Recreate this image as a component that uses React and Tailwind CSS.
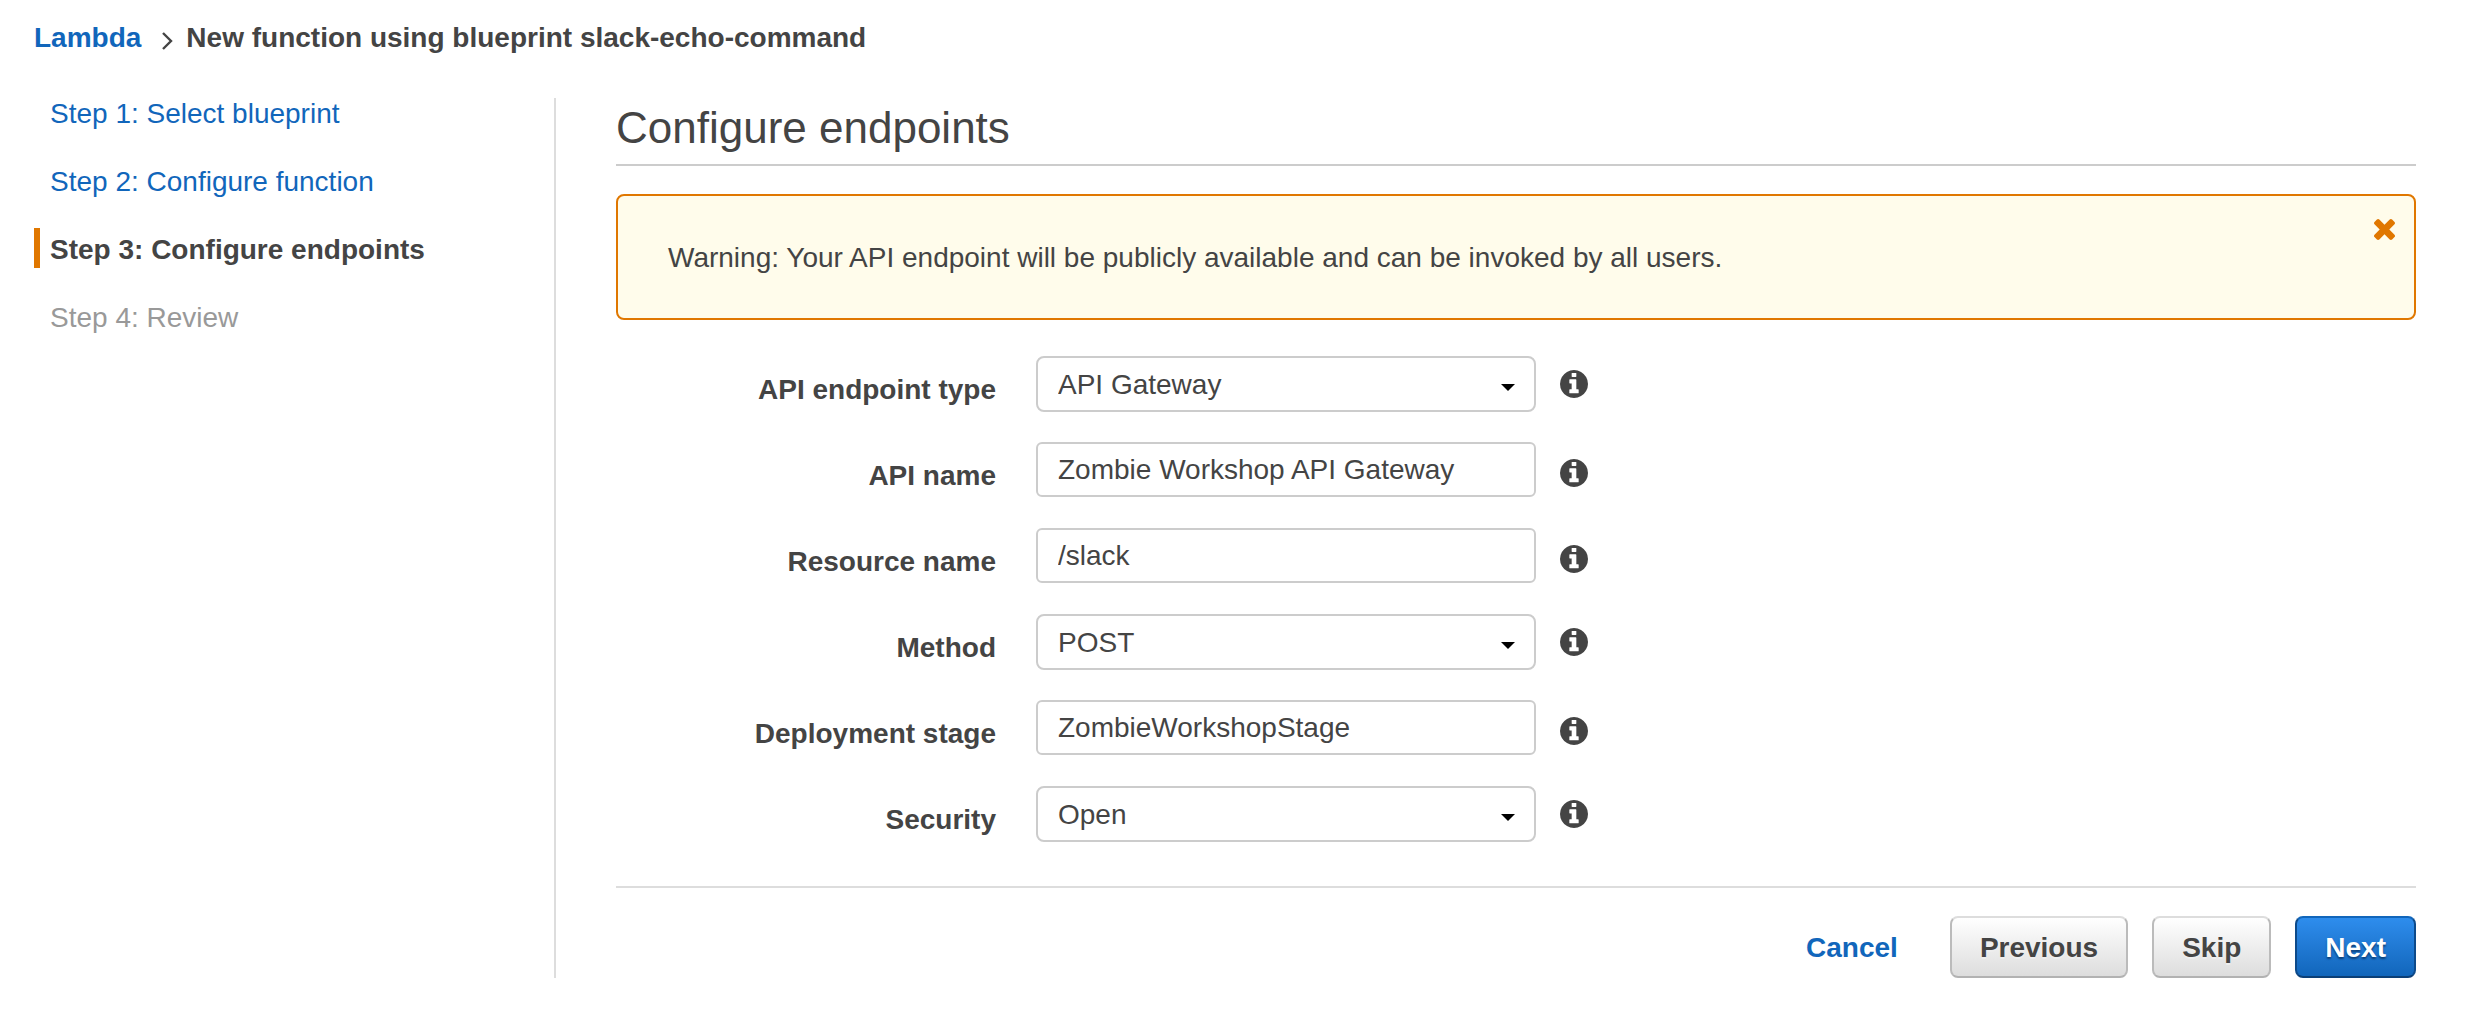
import React from 'react';

const steps = [
  { label: 'Step 1: Select blueprint', state: 'link' },
  { label: 'Step 2: Configure function', state: 'link' },
  { label: 'Step 3: Configure endpoints', state: 'current' },
  { label: 'Step 4: Review', state: 'disabled' },
];

const fields = [
  { id: 'endpoint-type', label: 'API endpoint type', kind: 'select', value: 'API Gateway' },
  { id: 'api-name', label: 'API name', kind: 'text', value: 'Zombie Workshop API Gateway' },
  { id: 'resource-name', label: 'Resource name', kind: 'text', value: '/slack' },
  { id: 'method', label: 'Method', kind: 'select', value: 'POST' },
  { id: 'stage', label: 'Deployment stage', kind: 'text', value: 'ZombieWorkshopStage' },
  { id: 'security', label: 'Security', kind: 'select', value: 'Open' },
];

function InfoIcon() {
  return (
    <svg viewBox="128 128 1536 1536" className="size-7" fill="currentColor" aria-hidden="true">
      <path d="M1152 1376v-160q0-14-9-23t-23-9h-96v-512q0-14-9-23t-23-9h-320q-14 0-23 9t-9 23v160q0 14 9 23t23 9h96v320h-96q-14 0-23 9t-9 23v160q0 14 9 23t23 9h448q14 0 23-9t9-23zm-128-896v-160q0-14-9-23t-23-9h-192q-14 0-23 9t-9 23v160q0 14 9 23t23 9h192q14 0 23-9t9-23zm640 416q0 209-103 385.5t-279.5 279.5-385.5 103-385.5-103-279.5-279.5-103-385.5 103-385.5 279.5-279.5 385.5-103 385.5 103 279.5 279.5 103 385.5z" />
    </svg>
  );
}

function CloseIcon() {
  return (
    <svg viewBox="302 366 1188 1188" className="size-[21px]" fill="currentColor" aria-hidden="true">
      <path d="M1490 1322q0 40-28 68l-136 136q-28 28-68 28t-68-28l-294-294-294 294q-28 28-68 28t-68-28l-136-136q-28-28-28-68t28-68l294-294-294-294q-28-28-28-68t28-68l136-136q28-28 68-28t68 28l294 294 294-294q28-28 68-28t68 28l136 136q28 28 28 68t-28 68l-294 294 294 294q28 28 28 68z" />
    </svg>
  );
}

function Step({ label, state }) {
  if (state === 'link') {
    return (
      <li className="h-10 border-l-6 border-transparent pl-[10px]">
        <a href="#" className="text-[#1166bb]">{label}</a>
      </li>
    );
  }
  if (state === 'current') {
    return (
      <li aria-current="step" className="h-10 border-l-6 border-[#e07700] pl-[10px] font-bold">
        {label}
      </li>
    );
  }
  return <li className="h-10 border-l-6 border-transparent pl-[10px] text-[#999999]">{label}</li>;
}

function Field({ id, label, kind, value }) {
  const isSelect = kind === 'select';
  return (
    <div className="flex h-14 items-start">
      <label htmlFor={id} className="w-[380px] shrink-0 pt-[14px] text-right font-bold">
        {label}
      </label>
      {isSelect ? (
        <div className="relative ml-10 w-[500px]">
          <select
            id={id}
            defaultValue={value}
            className="h-14 w-full appearance-none rounded-lg border-2 border-[#cccccc] bg-white px-5 pt-0.5"
          >
            <option>{value}</option>
          </select>
          <svg viewBox="0 0 14 7" className="pointer-events-none absolute top-7 right-[21px] h-[7px] w-[14px]" aria-hidden="true">
            <path d="M0 0h14L7 7z" fill="#000" />
          </svg>
        </div>
      ) : (
        <input
          id={id}
          type="text"
          defaultValue={value}
          className="ml-10 h-[55px] w-[500px] rounded-md border-2 border-[#cccccc] bg-white px-5"
        />
      )}
      <button
        type="button"
        aria-label={`About ${label}`}
        className={isSelect ? 'mt-[14px] ml-6' : 'mt-[17px] ml-6'}
      >
        <InfoIcon />
      </button>
    </div>
  );
}

export default function App() {
  return (
    <div className="bg-white pt-[18px] pr-14 pb-[34px] pl-[34px] font-['Helvetica_Neue','Liberation_Sans',Arial,sans-serif] text-[28px] leading-10 text-[#444444]">
      <nav aria-label="Breadcrumb" className="flex items-center font-bold">
        <a href="#" className="text-[#1166bb]">Lambda</a>
        <svg viewBox="0 0 12 20" className="mt-[6px] mr-[13px] ml-5 h-5 w-3" fill="none" stroke="currentColor" strokeWidth="2.4" aria-hidden="true">
          <path d="M2 2l8 8-8 8" />
        </svg>
        <span>New function using blueprint slack-echo-command</span>
      </nav>

      <div className="mt-[34px] flex">
        <ol className="flex w-[520px] shrink-0 flex-col gap-7 leading-11">
          {steps.map((s) => (
            <Step key={s.label} {...s} />
          ))}
        </ol>

        <main className="mt-[6px] min-w-0 flex-1 border-l-2 border-[#dddddd] pl-[60px]">
          <h1 className="border-b-2 border-[#cccccc] pt-0.5 pb-2 text-[44px] leading-14">Configure endpoints</h1>

          <div role="alert" className="relative mt-7 rounded-lg border-2 border-[#e07700] bg-[#fffceb] px-[50px] pt-[42px] pb-10">
            Warning: Your API endpoint will be publicly available and can be invoked by all users.
            <button type="button" aria-label="Dismiss" className="absolute top-[23px] right-[19px] text-[#e07700]">
              <CloseIcon />
            </button>
          </div>

          <form className="mt-9" onSubmit={(e) => e.preventDefault()}>
            <div className="flex flex-col gap-[30px]">
              {fields.map((f) => (
                <Field key={f.id} {...f} />
              ))}
            </div>

            <div className="mt-11 flex items-center justify-end gap-6 border-t-2 border-[#dddddd] pt-7 font-bold">
              <a href="#" className="mr-7 pt-0.5 text-[#1166bb]">Cancel</a>
              <button
                type="button"
                className="h-[62px] rounded-lg border-2 border-x-[#bbbbbb] border-t-[#dddddd] border-b-[#b2b2b2] bg-linear-to-b from-white to-[#dddddd] px-7 pt-0.5 text-shadow-[0_2px_0_#eeeeee]"
              >
                Previous
              </button>
              <button
                type="button"
                className="h-[62px] rounded-lg border-2 border-x-[#bbbbbb] border-t-[#dddddd] border-b-[#b2b2b2] bg-linear-to-b from-white to-[#dddddd] px-7 pt-0.5 text-shadow-[0_2px_0_#eeeeee]"
              >
                Skip
              </button>
              <button
                type="submit"
                className="h-[62px] rounded-lg border-2 border-x-[#0d4a8a] border-t-[#1166bb] border-b-[#0b3f77] bg-linear-to-b from-[#2e8ded] to-[#1166bb] px-7 pt-0.5 text-white text-shadow-[0_2px_2px_#0b3f77]"
              >
                Next
              </button>
            </div>
          </form>
        </main>
      </div>
    </div>
  );
}
